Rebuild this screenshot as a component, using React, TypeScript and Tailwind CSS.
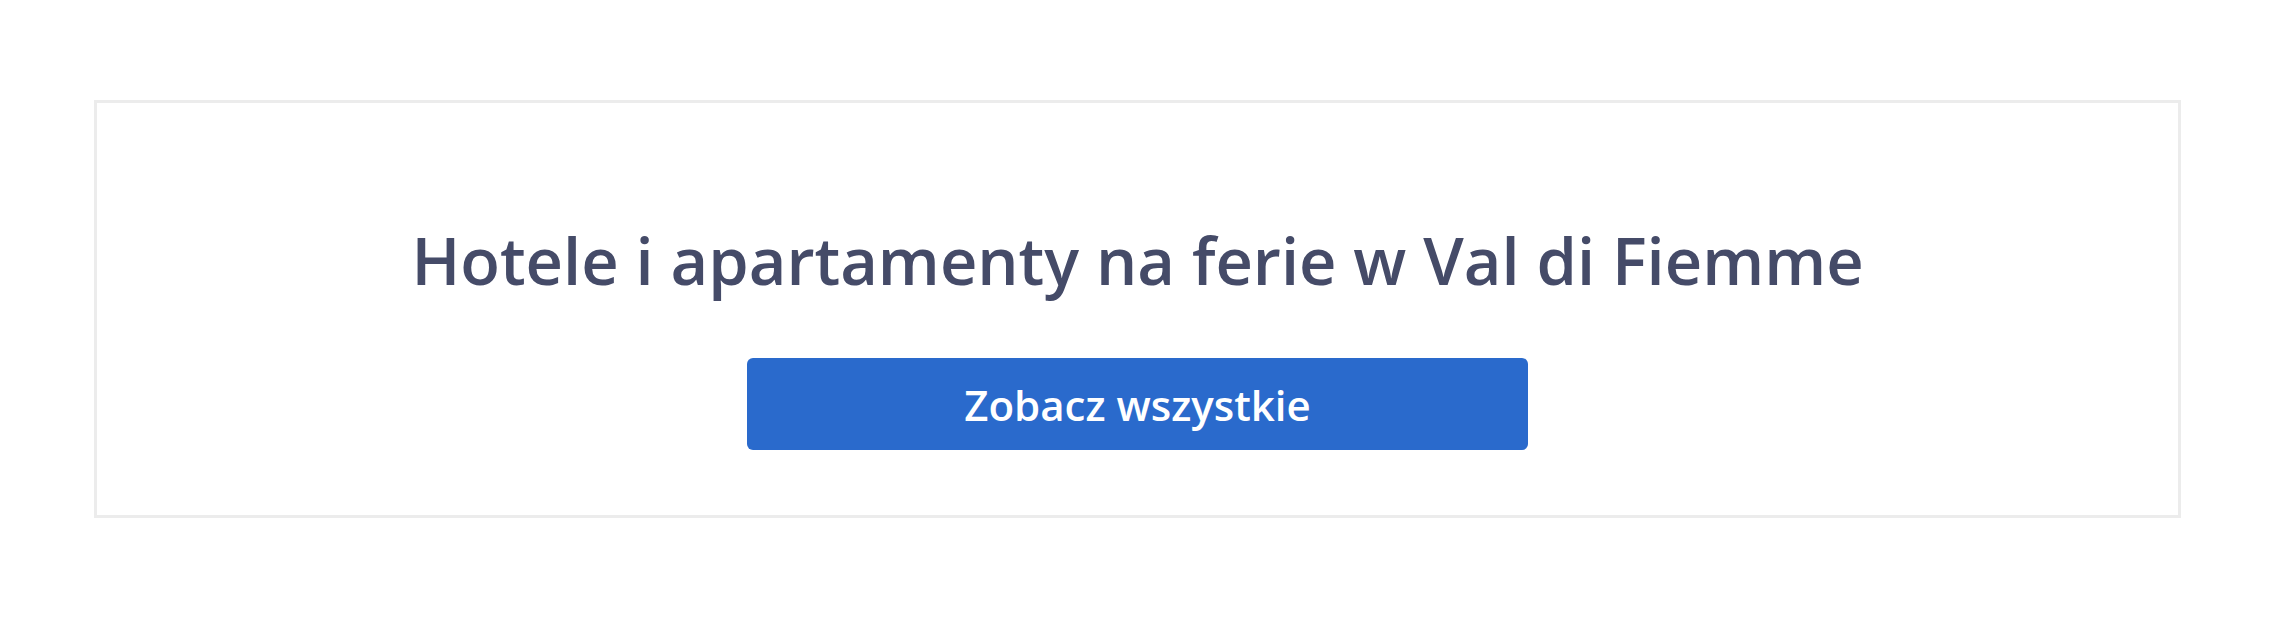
const App = () => {
    return (
        <div className="w-full min-h-[619px] bg-white pt-[100px] px-[94px]" style={{ fontFamily: '"Open Sans", sans-serif' }}>
            <div className="w-[2087px] h-[418px] border-[3px] border-[#ececec] flex flex-col items-center pt-[118px]">
                <h2 className="text-[65px] leading-[78px] font-semibold text-[#454b68]">
                    Hotele i apartamenty na ferie w Val di Fiemme
                </h2>
                <button className="mt-[59px] w-[781px] h-[92px] rounded-[6px] bg-[#2a6acc] text-white text-[42px] font-semibold">
                    Zobacz wszystkie
                </button>
            </div>
        </div>
    )
}

export default App
